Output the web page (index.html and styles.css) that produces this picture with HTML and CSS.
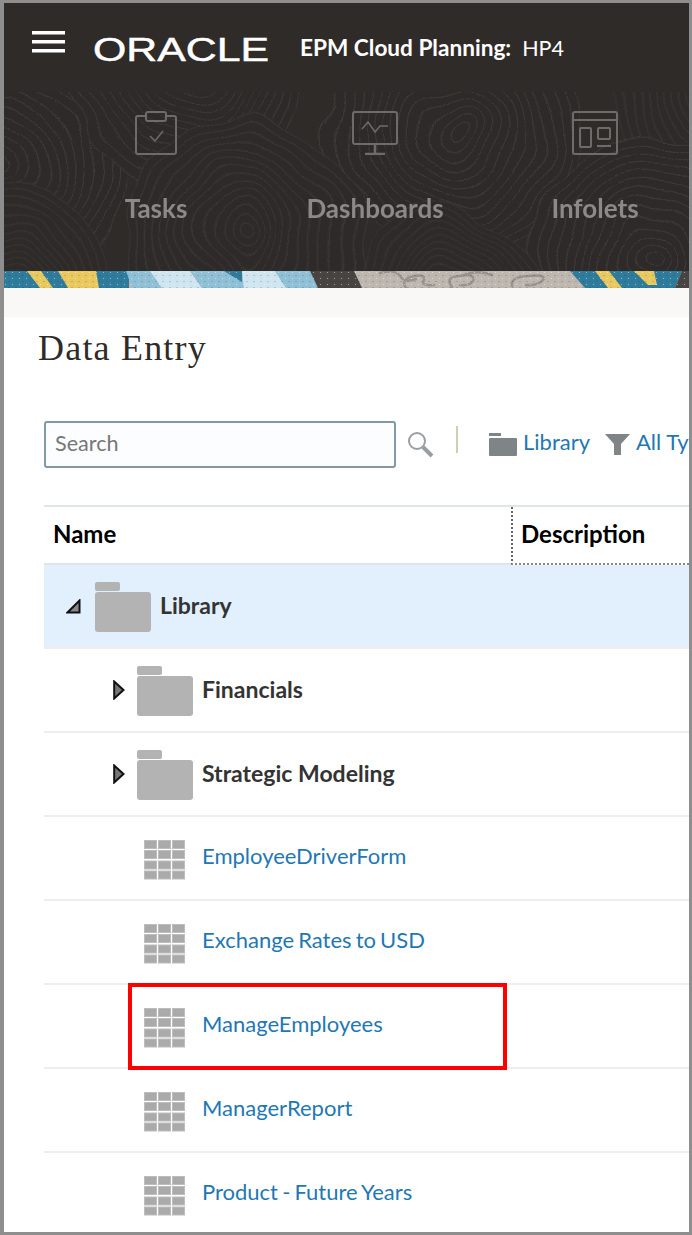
FILE: index.html
```html
<!DOCTYPE html>
<html lang="en">
<head>
    <meta charset="UTF-8">
    <meta name="viewport" content="width=device-width, initial-scale=1.0">
    <title>Data Entry</title>
    <link rel="stylesheet" href="styles.css">
</head>
<body>
    <svg class="defs" width="0" height="0">
        <filter id="wobble" x="-10%" y="-10%" width="120%" height="120%">
            <feTurbulence type="fractalNoise" baseFrequency="0.012" numOctaves="2" seed="4"/>
            <feDisplacementMap in="SourceGraphic" scale="38" xChannelSelector="R" yChannelSelector="G"/>
        </filter>
        <pattern id="speckle" width="7" height="6" patternUnits="userSpaceOnUse">
            <circle cx="1.500" cy="1.500" r=".6" fill="#fff" opacity=".55"/>
            <circle cx="5" cy="4.500" r=".5" fill="#222" opacity=".45"/>
        </pattern>
        <symbol id="rings" viewBox="-130 -130 260 260" overflow="visible">
            <g fill="none" stroke="#3f3b38" stroke-width="1">
                <circle r="126" fill="#2f2b29"/>
                <circle r="117"/><circle r="108"/><circle r="99"/><circle r="90"/><circle r="81"/>
                <circle r="72"/><circle r="63"/><circle r="54"/><circle r="45"/><circle r="36"/>
                <circle r="27"/><circle r="18"/><circle r="9"/>
            </g>
        </symbol>
        <symbol id="folder" viewBox="0 0 56 50">
            <rect x="0" y="0" width="25" height="9" rx="2" fill="#b3b3b3"/>
            <rect x="0" y="10" width="56" height="40" rx="3" fill="#b3b3b3"/>
        </symbol>
        <symbol id="grid" viewBox="0 0 41 40">
            <g fill="#aaa" stroke="#bdbdbd" stroke-width="1">
                <rect x=".5" y=".5" width="12" height="8"/><rect x="14.500" y=".5" width="12" height="8"/><rect x="28.500" y=".5" width="12" height="8"/>
                <rect x=".5" y="10.500" width="12" height="8"/><rect x="14.500" y="10.500" width="12" height="8"/><rect x="28.500" y="10.500" width="12" height="8"/>
                <rect x=".5" y="21" width="12" height="8"/><rect x="14.500" y="21" width="12" height="8"/><rect x="28.500" y="21" width="12" height="8"/>
                <rect x=".5" y="31" width="12" height="8"/><rect x="14.500" y="31" width="12" height="8"/><rect x="28.500" y="31" width="12" height="8"/>
            </g>
        </symbol>
        <symbol id="closed" viewBox="0 0 12 20">
            <path d="M1.200 1.500 L10.500 10 L1.200 18.500 Z" fill="#777" stroke="#111" stroke-width="2" stroke-linejoin="miter"/>
        </symbol>
    </svg>

    <div class="frame">
        <div class="topbar">
            <svg class="menu-icon" width="33" height="22" viewBox="0 0 33 22">
                <rect y="0" width="33" height="3.500" fill="#fff"/>
                <rect y="9" width="33" height="3.500" fill="#fff"/>
                <rect y="18" width="33" height="3.500" fill="#fff"/>
            </svg>
            <span class="logo">ORACLE</span>
            <span class="app-name">EPM Cloud Planning:</span>
            <span class="app-env">HP4</span>
        </div>

        <div class="hero">
            <svg class="hero-pattern" width="688" height="179" viewBox="0 0 688 179">
                <g filter="url(#wobble)">
                    <use href="#rings" x="-130" y="-60" width="260" height="260"/>
                    <use href="#rings" x="610" y="-110" width="220" height="220"/>
                    <use href="#rings" x="60" y="-150" width="250" height="250"/>
                    <use href="#rings" x="320" y="-90" width="260" height="260"/>
                    <use href="#rings" x="-110" y="90" width="220" height="220"/>
                    <use href="#rings" x="120" y="20" width="240" height="240"/>
                    <use href="#rings" x="520" y="40" width="260" height="260"/>
                    <use href="#rings" x="340" y="110" width="200" height="200"/>
                </g>
            </svg>
            <div class="hero-tab">
                <svg width="42" height="44" viewBox="0 0 42 44" fill="none" stroke="#6f6b68" stroke-width="2">
                    <path d="M11 5 H3 Q1 5 1 7 V41 Q1 43 3 43 H39 Q41 43 41 41 V7 Q41 5 39 5 H31"/>
                    <rect x="11" y="1" width="20" height="9" rx="2"/>
                    <path d="M15 25 L20 30 L28 20" stroke-width="1.500"/>
                </svg>
                <span>Tasks</span>
            </div>
            <div class="hero-tab">
                <svg width="46" height="44" viewBox="0 0 46 44" fill="none" stroke="#6f6b68" stroke-width="2">
                    <rect x="1" y="1" width="44" height="32" rx="2"/>
                    <path d="M23 33 V43 M13 43 H33" stroke-width="2.500"/>
                    <path d="M10 18 L16 11 L23 21 L28 15 H36" stroke-width="1.500"/>
                </svg>
                <span>Dashboards</span>
            </div>
            <div class="hero-tab">
                <svg width="46" height="44" viewBox="0 0 46 44" fill="none" stroke="#6f6b68" stroke-width="2">
                    <rect x="1" y="1" width="44" height="42" rx="2"/>
                    <path d="M1 9 H45"/>
                    <rect x="8" y="17" width="11" height="19" rx="1"/>
                    <rect x="26" y="17" width="12" height="11" rx="1"/>
                    <path d="M25 35 H39"/>
                </svg>
                <span>Infolets</span>
            </div>
        </div>

        <svg class="stripe" width="688" height="17" viewBox="0 0 688 17">
            <rect width="688" height="17" fill="#bdb7b0"/>
            <rect width="125" height="17" fill="#2f7b9c"/>
            <polygon points="23,0 37,0 49,17 36,17" fill="#e9c95f"/>
            <polygon points="54,0 92,0 95,17 64,17" fill="#e9c95f"/>
            <polygon points="122,0 146,0 158,17 128,17" fill="#8fc0d5"/>
            <polygon points="146,0 186,0 198,17 158,17" fill="#cfe6f1"/>
            <polygon points="186,0 238,0 240,17 198,17" fill="#8fc0d5"/>
            <polygon points="220,0 238,0 238,11" fill="#2f7b9c"/>
            <polygon points="238,0 271,0 282,17 240,17" fill="#cfe6f1"/>
            <polygon points="271,0 306,0 314,17 282,17" fill="#8fc0d5"/>
            <polygon points="306,0 350,0 358,17 314,17" fill="#484442"/>
            <g fill="none" stroke="#98938d" stroke-width="2.500" stroke-linecap="round">
                <path d="M376 2 Q392 -2 396 5 T412 8"/>
                <path d="M402 17 Q396 8 410 5 Q422 3 420 9 Q416 15 430 14"/>
                <path d="M448 16 Q440 6 456 5 Q468 2 470 8 Q468 15 456 14"/>
                <path d="M462 3 Q476 -1 488 4"/>
                <path d="M508 15 Q506 6 524 5 Q540 3 540 8 Q534 15 522 14"/>
            </g>
            <polygon points="566,0 678,0 671,17 581,17" fill="#2f7b9c"/>
            <polygon points="591,0 605,0 618,17 604,17" fill="#e9c95f"/>
            <polygon points="630,0 650,0 653,14 644,14" fill="#e9c95f"/>
            <polygon points="678,0 688,0 688,17 671,17" fill="#484442"/>
            <rect width="688" height="17" fill="url(#speckle)"/>
        </svg>
        <div class="band"></div>

        <h1 class="page-title">Data Entry</h1>

        <div class="toolbar">
            <div class="search-box">Search</div>
            <svg class="search-icon" width="27" height="27" viewBox="0 0 27 27" fill="none" stroke="#9a9ea2">
                <circle cx="10" cy="10" r="8" stroke-width="2"/>
                <path d="M16 16 L25 25" stroke-width="4"/>
            </svg>
            <span class="divider"></span>
            <svg class="tool-folder" width="28" height="23" viewBox="0 0 28 23">
                <rect x="0" y="0" width="12" height="3" fill="#7f8487"/>
                <rect x="0" y="5" width="28" height="18" rx="1" fill="#7f8487"/>
            </svg>
            <a class="tool-link">Library</a>
            <svg class="tool-filter" width="25" height="21" viewBox="0 0 25 21">
                <path d="M0 0 H25 L16 10 V21 H9 V10 Z" fill="#7f8487"/>
            </svg>
            <a class="tool-link">All Types</a>
        </div>

        <div class="table">
            <div class="table-head">
                <div class="head-name">Name</div>
                <div class="head-desc">Description</div>
            </div>

            <div class="row row-selected">
                <svg class="tree-open" width="15" height="15" viewBox="0 0 15 15">
                    <path d="M1.500 13.500 L13.500 1.500 V13.500 Z" fill="#888" stroke="#111" stroke-width="2"/>
                </svg>
                <svg class="folder" width="56" height="50"><use href="#folder"/></svg>
                <span class="row-title">Library</span>
            </div>
            <div class="row row-sub">
                <svg class="tree-closed" width="12" height="20"><use href="#closed"/></svg>
                <svg class="folder" width="56" height="50"><use href="#folder"/></svg>
                <span class="row-title">Financials</span>
            </div>
            <div class="row row-sub">
                <svg class="tree-closed" width="12" height="20"><use href="#closed"/></svg>
                <svg class="folder" width="56" height="50"><use href="#folder"/></svg>
                <span class="row-title">Strategic Modeling</span>
            </div>
            <div class="row row-form">
                <svg class="grid" width="41" height="40"><use href="#grid"/></svg>
                <a class="row-link">EmployeeDriverForm</a>
            </div>
            <div class="row row-form">
                <svg class="grid" width="41" height="40"><use href="#grid"/></svg>
                <a class="row-link">Exchange Rates to USD</a>
            </div>
            <div class="row row-form">
                <svg class="grid" width="41" height="40"><use href="#grid"/></svg>
                <a class="row-link">ManageEmployees</a>
                <div class="callout"></div>
            </div>
            <div class="row row-form">
                <svg class="grid" width="41" height="40"><use href="#grid"/></svg>
                <a class="row-link">ManagerReport</a>
            </div>
            <div class="row row-form">
                <svg class="grid" width="41" height="40"><use href="#grid"/></svg>
                <a class="row-link">Product - Future Years</a>
            </div>
        </div>
    </div>
</body>
</html>
```

FILE: styles.css
```css
html, body {
    margin: 0;
    padding: 0;
}
body {
    font-family: Lato, "Liberation Sans", sans-serif;
    background: #fff;
}
.defs {
    position: absolute;
}
.frame {
    width: 692px;
    height: 1235px;
    box-sizing: border-box;
    border-style: solid;
    border-color: #8e8e8e;
    border-width: 3px 3px 3px 4px;
    overflow: hidden;
    background: #fff;
}

/* top bar */
.topbar {
    height: 89px;
    background: #2f2b29;
    display: flex;
    align-items: center;
    color: #fff;
    white-space: nowrap;
}
.menu-icon {
    margin-left: 28px;
    margin-bottom: 12px;
    flex: none;
}
.logo {
    width: 136px;
    margin-left: 28px;
    padding-top: 2px;
    font-family: "Liberation Sans", sans-serif;
    font-size: 34px;
    line-height: 1;
    -webkit-text-stroke: 0.5px #fff;
    transform: scaleX(1.26);
    transform-origin: left center;
}
.app-name {
    margin-left: 71px;
    font-size: 22.6px;
    font-weight: 700;
}
.app-env {
    margin-left: 11px;
    font-size: 21.5px;
}

/* hero with the three tabs */
.hero {
    position: relative;
    height: 179px;
    background: #2f2b29;
    overflow: hidden;
}
.hero-pattern {
    position: absolute;
    left: 0;
    top: 0;
}
.hero-tab {
    position: absolute;
    top: 19px;
    width: 160px;
    display: flex;
    flex-direction: column;
    align-items: center;
    gap: 38px;
    color: #8d8986;
    font-size: 26px;
    font-weight: 700;
    line-height: 30px;
}
.hero-tab:nth-of-type(1) { left: 72px; }
.hero-tab:nth-of-type(2) { left: 291px; }
.hero-tab:nth-of-type(3) { left: 511px; }

.stripe {
    display: block;
}
.band {
    height: 29px;
    background: #f9f8f6;
}

.page-title {
    margin: 0;
    height: 62px;
    padding-left: 34px;
    font-family: "Liberation Serif", serif;
    font-size: 36px;
    font-weight: 400;
    letter-spacing: 1.2px;
    line-height: 62px;
    color: #2f2b29;
}

/* search and filters */
.toolbar {
    display: flex;
    align-items: center;
    margin: 42px 0 37px 40px;
    height: 47px;
    white-space: nowrap;
}
.search-box {
    width: 352px;
    height: 47px;
    box-sizing: border-box;
    flex: none;
    padding-left: 9px;
    border: 2px solid #8199a5;
    border-radius: 3px;
    background: #fbfdff;
    color: #777;
    font-size: 21.6px;
    line-height: 41px;
}
.search-icon {
    margin-left: 11px;
    flex: none;
}
.divider {
    flex: none;
    width: 2px;
    height: 27px;
    margin: 0 0 10px 22px;
    background: #cfcfb8;
}
.tool-folder {
    flex: none;
    margin-left: 31px;
}
.tool-filter {
    flex: none;
    margin-left: 15px;
}
.tool-link {
    margin-left: 6px;
    margin-bottom: 6px;
    color: #1f78b4;
    font-size: 22px;
}

/* table */
.table {
    margin-left: 40px;
    border-top: 2px solid #dfe5e8;
}
.table-head {
    display: flex;
    height: 58px;
    font-size: 24px;
    font-weight: 700;
    color: #000;
    line-height: 53px;
}
.head-name {
    width: 467px;
    box-sizing: border-box;
    padding-left: 9px;
    border-bottom: 2px solid #dfe5e8;
}
.head-desc {
    flex: 1;
    padding-left: 8px;
    border-left: 2px dotted #666;
    border-bottom: 2px dotted #888;
}
.row {
    position: relative;
    display: flex;
    align-items: center;
    height: 84px;
    box-sizing: border-box;
    border-bottom: 2px solid #eeeeee;
}
.row-selected {
    background: #e2f0fd;
    padding-left: 22px;
}
.row-sub {
    padding-left: 69px;
}
.row-form {
    padding-left: 100px;
}
.tree-open {
    flex: none;
    margin-right: 14px;
}
.tree-closed {
    flex: none;
    margin-right: 12px;
}
.folder {
    flex: none;
    margin-right: 9px;
    margin-top: 1px;
}
.grid {
    flex: none;
    margin-right: 18px;
    margin-top: 3px;
}
.row-title {
    font-size: 23px;
    font-weight: 700;
    color: #333;
    margin-bottom: 3px;
}
.row-link {
    font-size: 22px;
    word-spacing: -1.5px;
    color: #1f78b4;
    margin-bottom: 5px;
    margin-left: -1px;
}
.callout {
    position: absolute;
    left: 84px;
    top: -2px;
    width: 379px;
    height: 87px;
    box-sizing: border-box;
    border: 4px solid #f00;
}
```
